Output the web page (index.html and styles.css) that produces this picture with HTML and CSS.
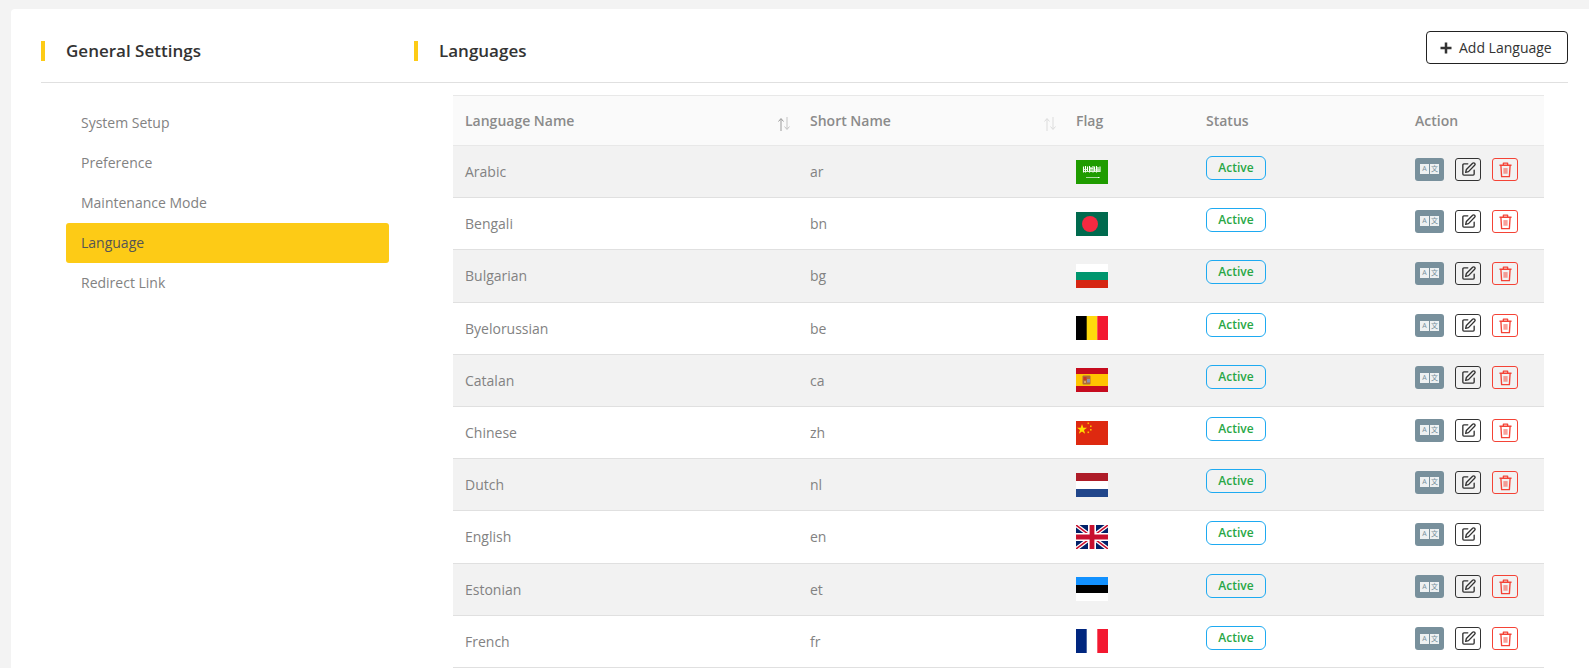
FILE: index.html
```html
<!DOCTYPE html>
<html lang="en">
<head>
    <meta charset="UTF-8">
    <meta name="viewport" content="width=device-width, initial-scale=1.0">
    <title>Languages</title>
    <link rel="stylesheet" href="styles.css">
</head>
<body>
    <svg class="sprites" width="0" height="0">
        <symbol id="i-edit" viewBox="0 0 24 24">
            <path d="M11 4H5.500A1.500 1.500 0 0 0 4 5.500v13A1.500 1.500 0 0 0 5.500 20h13a1.500 1.500 0 0 0 1.500-1.500V13" fill="none" stroke="currentColor" stroke-width="1.900" stroke-linecap="round"/>
            <path d="M17.800 3.200a2 2 0 0 1 2.900 2.900L12 15l-4 1 1-4z" fill="none" stroke="currentColor" stroke-width="1.900" stroke-linejoin="round"/>
        </symbol>
        <symbol id="i-trash" viewBox="0 0 24 24">
            <path d="M3.500 6h17M9 6V3h6v3M5.500 6l1 16h11l1-16" fill="none" stroke="currentColor" stroke-width="1.900" stroke-linejoin="round"/>
            <rect x="9" y="10" width="6" height="8" fill="currentColor" opacity=".5"/>
        </symbol>
        <symbol id="f-ar" viewBox="0 0 32 24">
            <rect width="32" height="24" fill="#1f9c00"/>
            <path d="M7.500 6.500v6M9.500 6v6.500M11.500 6.500v5M13.500 6v6.500M15 7v5M17 6v6.500M18.500 6.500v5.500M20.500 6v6.500M22 7v5M24 6.500v5.500" stroke="#fff" stroke-width="1.100"/>
            <path d="M7.500 9.500h4M13 8.500h4M18 10h6M8 11.500h16" stroke="#e6f5df" stroke-width=".9"/>
            <path d="M10 17.500h12" stroke="#cfeac6" stroke-width=".8"/>
            <path d="M22 17.500h1.500" stroke="#fff" stroke-width="1.100"/>
        </symbol>
        <symbol id="f-bn" viewBox="0 0 32 24">
            <rect width="32" height="24" fill="#006a4e"/>
            <circle cx="14" cy="12" r="8" fill="#f42a41"/>
        </symbol>
        <symbol id="f-bg" viewBox="0 0 32 24">
            <rect width="32" height="8" fill="#fff"/>
            <rect y="8" width="32" height="8" fill="#00966e"/>
            <rect y="16" width="32" height="8" fill="#d62612"/>
        </symbol>
        <symbol id="f-be" viewBox="0 0 32 24">
            <rect width="11" height="24" fill="#000"/>
            <rect x="10.700" width="10.700" height="24" fill="#ffd90c"/>
            <rect x="21.300" width="10.700" height="24" fill="#f31830"/>
        </symbol>
        <symbol id="f-ca" viewBox="0 0 32 24">
            <rect width="32" height="24" fill="#c60b1e"/>
            <rect y="6" width="32" height="12" fill="#ffc400"/>
            <rect x="6.500" y="7.500" width="8" height="9" rx="1" fill="#ad6b3a"/>
            <rect x="7.500" y="9" width="3" height="3" fill="#c8322b"/>
            <rect x="11" y="11" width="3" height="3.500" fill="#8a8fb0"/>
            <rect x="8" y="13" width="2" height="2" fill="#d9a066"/>
        </symbol>
        <symbol id="f-zh" viewBox="0 0 32 24">
            <rect width="32" height="24" fill="#de2910"/>
            <polygon points="6,3 7.300,6.800 11,6.800 8,9 9.100,12.700 6,10.500 2.900,12.700 4,9 1,6.800 4.700,6.800" fill="#ffde00"/>
            <rect x="11.500" y="1.500" width="1.600" height="1.600" fill="#ffb700"/>
            <rect x="14" y="4.500" width="1.600" height="1.600" fill="#ffb700"/>
            <rect x="14" y="8" width="1.600" height="1.600" fill="#ffb700"/>
            <rect x="11.500" y="10.500" width="1.600" height="1.600" fill="#ffb700"/>
        </symbol>
        <symbol id="f-nl" viewBox="0 0 32 24">
            <rect width="32" height="8" fill="#ae1c28"/>
            <rect y="8" width="32" height="8" fill="#fff"/>
            <rect y="16" width="32" height="8" fill="#21468b"/>
        </symbol>
        <symbol id="f-en" viewBox="0 0 32 24">
            <rect width="32" height="24" fill="#012169"/>
            <path d="M0 0l32 24M32 0L0 24" stroke="#fff" stroke-width="4"/>
            <path d="M0 0l32 24M32 0L0 24" stroke="#c8102e" stroke-width="1.500"/>
            <path d="M16 0v24M0 12h32" stroke="#fff" stroke-width="8"/>
            <path d="M16 0v24M0 12h32" stroke="#c8102e" stroke-width="4.800"/>
        </symbol>
        <symbol id="f-et" viewBox="0 0 32 24">
            <rect width="32" height="8" fill="#1291ff"/>
            <rect y="8" width="32" height="8" fill="#000"/>
            <rect y="16" width="32" height="8" fill="#fff"/>
        </symbol>
        <symbol id="f-fr" viewBox="0 0 32 24">
            <rect width="11" height="24" fill="#00267f"/>
            <rect x="10.700" width="10.700" height="24" fill="#fff"/>
            <rect x="21.300" width="10.700" height="24" fill="#f31830"/>
        </symbol>
    </svg>

    <div class="card">
        <div class="card-head">
            <div class="head-left"><h2 class="heading">General Settings</h2></div>
            <div class="head-right">
                <h2 class="heading">Languages</h2>
                <a href="#" class="btn-add">
                    <svg class="plus" viewBox="0 0 12 12"><path d="M6 0.500v11M0.500 6h11" stroke="currentColor" stroke-width="2.500"/></svg>
                    Add Language
                </a>
            </div>
        </div>
        <div class="card-body">
            <ul class="side-nav">
                <li><a href="#">System Setup</a></li>
                <li><a href="#">Preference</a></li>
                <li><a href="#">Maintenance Mode</a></li>
                <li><a href="#" class="active">Language</a></li>
                <li><a href="#">Redirect Link</a></li>
            </ul>
            <table class="lang-table">
                <colgroup>
                    <col class="c-name"><col class="c-short"><col class="c-flag"><col class="c-status"><col class="c-action">
                </colgroup>
                <thead>
                    <tr>
                        <th class="sortable">Language Name
                            <svg class="sort on" viewBox="0 0 14 14"><path class="up" d="M4 14V2M1.500 4.500L4 1.500l2.500 3"/><path class="down" d="M10 0v12M7.500 9.500l2.500 3 2.500-3"/></svg>
                        </th>
                        <th class="sortable">Short Name
                            <svg class="sort" viewBox="0 0 14 14"><path class="up" d="M4 14V2M1.500 4.500L4 1.500l2.500 3"/><path class="down" d="M10 0v12M7.500 9.500l2.500 3 2.500-3"/></svg>
                        </th>
                        <th>Flag</th>
                        <th>Status</th>
                        <th>Action</th>
                    </tr>
                </thead>
                <tbody>
                    <tr>
                        <td>Arabic</td><td>ar</td>
                        <td><svg class="flag"><use href="#f-ar"/></svg></td>
                        <td><span class="badge">Active</span></td>
                        <td><div class="actions"><a href="#" class="act translate"><span>A</span><span>文</span></a><a href="#" class="act edit"><svg><use href="#i-edit"/></svg></a><a href="#" class="act trash"><svg><use href="#i-trash"/></svg></a></div></td>
                    </tr>
                    <tr>
                        <td>Bengali</td><td>bn</td>
                        <td><svg class="flag"><use href="#f-bn"/></svg></td>
                        <td><span class="badge">Active</span></td>
                        <td><div class="actions"><a href="#" class="act translate"><span>A</span><span>文</span></a><a href="#" class="act edit"><svg><use href="#i-edit"/></svg></a><a href="#" class="act trash"><svg><use href="#i-trash"/></svg></a></div></td>
                    </tr>
                    <tr>
                        <td>Bulgarian</td><td>bg</td>
                        <td><svg class="flag"><use href="#f-bg"/></svg></td>
                        <td><span class="badge">Active</span></td>
                        <td><div class="actions"><a href="#" class="act translate"><span>A</span><span>文</span></a><a href="#" class="act edit"><svg><use href="#i-edit"/></svg></a><a href="#" class="act trash"><svg><use href="#i-trash"/></svg></a></div></td>
                    </tr>
                    <tr>
                        <td>Byelorussian</td><td>be</td>
                        <td><svg class="flag"><use href="#f-be"/></svg></td>
                        <td><span class="badge">Active</span></td>
                        <td><div class="actions"><a href="#" class="act translate"><span>A</span><span>文</span></a><a href="#" class="act edit"><svg><use href="#i-edit"/></svg></a><a href="#" class="act trash"><svg><use href="#i-trash"/></svg></a></div></td>
                    </tr>
                    <tr>
                        <td>Catalan</td><td>ca</td>
                        <td><svg class="flag"><use href="#f-ca"/></svg></td>
                        <td><span class="badge">Active</span></td>
                        <td><div class="actions"><a href="#" class="act translate"><span>A</span><span>文</span></a><a href="#" class="act edit"><svg><use href="#i-edit"/></svg></a><a href="#" class="act trash"><svg><use href="#i-trash"/></svg></a></div></td>
                    </tr>
                    <tr>
                        <td>Chinese</td><td>zh</td>
                        <td><svg class="flag"><use href="#f-zh"/></svg></td>
                        <td><span class="badge">Active</span></td>
                        <td><div class="actions"><a href="#" class="act translate"><span>A</span><span>文</span></a><a href="#" class="act edit"><svg><use href="#i-edit"/></svg></a><a href="#" class="act trash"><svg><use href="#i-trash"/></svg></a></div></td>
                    </tr>
                    <tr>
                        <td>Dutch</td><td>nl</td>
                        <td><svg class="flag"><use href="#f-nl"/></svg></td>
                        <td><span class="badge">Active</span></td>
                        <td><div class="actions"><a href="#" class="act translate"><span>A</span><span>文</span></a><a href="#" class="act edit"><svg><use href="#i-edit"/></svg></a><a href="#" class="act trash"><svg><use href="#i-trash"/></svg></a></div></td>
                    </tr>
                    <tr>
                        <td>English</td><td>en</td>
                        <td><svg class="flag"><use href="#f-en"/></svg></td>
                        <td><span class="badge">Active</span></td>
                        <td><div class="actions"><a href="#" class="act translate"><span>A</span><span>文</span></a><a href="#" class="act edit"><svg><use href="#i-edit"/></svg></a></div></td>
                    </tr>
                    <tr>
                        <td>Estonian</td><td>et</td>
                        <td><svg class="flag"><use href="#f-et"/></svg></td>
                        <td><span class="badge">Active</span></td>
                        <td><div class="actions"><a href="#" class="act translate"><span>A</span><span>文</span></a><a href="#" class="act edit"><svg><use href="#i-edit"/></svg></a><a href="#" class="act trash"><svg><use href="#i-trash"/></svg></a></div></td>
                    </tr>
                    <tr>
                        <td>French</td><td>fr</td>
                        <td><svg class="flag"><use href="#f-fr"/></svg></td>
                        <td><span class="badge">Active</span></td>
                        <td><div class="actions"><a href="#" class="act translate"><span>A</span><span>文</span></a><a href="#" class="act edit"><svg><use href="#i-edit"/></svg></a><a href="#" class="act trash"><svg><use href="#i-trash"/></svg></a></div></td>
                    </tr>
                </tbody>
            </table>
        </div>
    </div>
</body>
</html>
```

FILE: styles.css
```css
html, body { height: 100%; }
body {
    font-family: "Open Sans", sans-serif;
    font-size: 14px;
    color: #828282;
    background-color: #f3f3f3;
    margin: 0;
    padding: 9px 0 0 11px;
    box-sizing: border-box;
    overflow: hidden;
}
a { text-decoration: none; color: inherit; }
.sprites { position: absolute; }
.card {
    background-color: #fff;
    padding: 0 21px 0 30px;
    min-height: 100%;
    border-radius: 4px 0 0 0;
}
.card-head {
    display: flex;
    align-items: center;
    height: 74px;
    padding-top: 11px;
    box-sizing: border-box;
    border-bottom: 1px solid #e0e0e0;
}
.head-left { width: 373px; flex: none; }
.head-right {
    flex: 1;
    display: flex;
    justify-content: space-between;
    align-items: center;
}
.heading {
    margin: 0;
    padding-left: 21px;
    border-left: 4px solid #fdcb16;
    font-size: 17px;
    font-weight: 600;
    line-height: 20px;
    color: #333;
}
.btn-add {
    display: flex;
    align-items: center;
    gap: 7px;
    width: 142px;
    height: 33px;
    box-sizing: border-box;
    padding-left: 13px;
    margin-bottom: 7px;
    border: 1px solid #222;
    border-radius: 4px;
    background-color: #fff;
    color: #333;
    white-space: nowrap;
    font-size: 14px;
}
.plus { width: 12px; height: 12px; flex: none; }
.card-body { display: flex; align-items: flex-start; }
.side-nav {
    list-style: none;
    margin: 20px 0 0 25px;
    padding: 0;
    width: 323px;
    flex: none;
}
.side-nav a {
    display: block;
    height: 40px;
    line-height: 40px;
    padding-left: 15px;
    border-radius: 3px;
}
.side-nav a.active { background-color: #fdcb16; color: #555; }
.lang-table {
    margin: 12px 0 0 64px;
    width: 1091px;
    flex: none;
    table-layout: fixed;
    border-collapse: collapse;
}
.c-name { width: 345px; }
.c-short { width: 266px; }
.c-flag { width: 130px; }
.c-status { width: 209px; }
.lang-table th {
    position: relative;
    height: 50px;
    padding: 0 12px 1px;
    box-sizing: border-box;
    text-align: left;
    font-weight: 600;
    color: #8b8b8b;
    background-color: #fafafa;
    border-top: 1px solid #e8e8e8;
    border-bottom: 1px solid #e8e8e8;
}
.sort {
    position: absolute;
    right: 7px;
    top: 21px;
    width: 14px;
    height: 14px;
    fill: none;
    stroke: #dcdcdc;
    stroke-width: 1;
}
.sort.on .up { stroke: #9a9a9a; }
.sort.on .down { stroke: #c4c4c4; }
.lang-table td {
    height: 52.2px;
    padding: 0 12px;
    box-sizing: border-box;
    border-bottom: 1px solid #e0e0e0;
}
.lang-table tbody tr:nth-child(odd) td { background-color: #f2f2f2; }
.flag { display: block; width: 32px; height: 24px; }
.badge {
    display: block;
    width: 60px;
    height: 24px;
    line-height: 22px;
    box-sizing: border-box;
    margin-bottom: 7px;
    text-align: center;
    font-size: 12px;
    font-weight: 600;
    color: #28a745;
    border: 1px solid #1eaaf1;
    border-radius: 6px;
}
.actions { display: flex; gap: 11px; margin-top: -5px; }
.act {
    display: flex;
    align-items: center;
    justify-content: center;
    width: 26px;
    height: 23px;
    box-sizing: border-box;
    border: 1px solid;
    border-radius: 3px;
}
.act svg { display: block; width: 17px; height: 17px; }
.act.translate {
    width: 29px;
    gap: 1px;
    border: 0;
    background-color: #78909c;
}
.act.translate span {
    width: 9px;
    height: 10px;
    line-height: 10px;
    text-align: center;
    font-family: "Open Sans", "Noto Sans CJK SC", sans-serif;
    font-size: 7px;
    color: #78909c;
    background-color: #eef1f2;
}
.act.edit { color: #333; }
.act.trash { color: #f44336; }
```
